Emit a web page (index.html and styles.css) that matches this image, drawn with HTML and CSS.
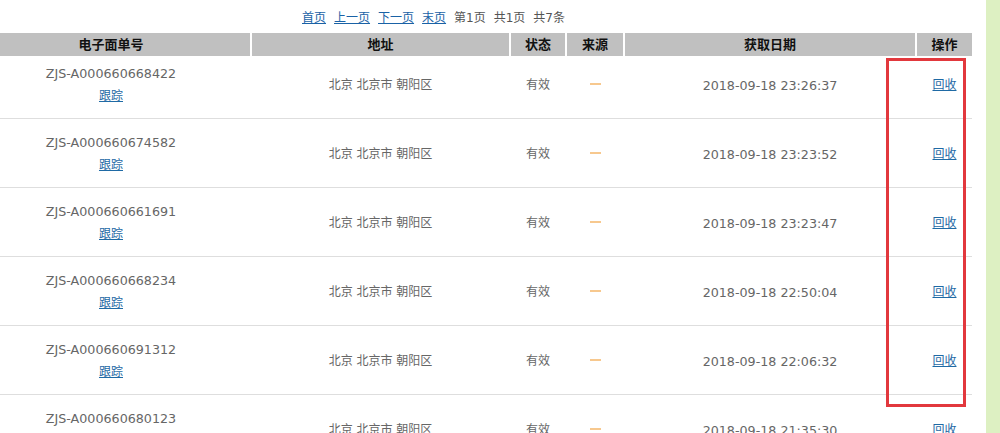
FILE: index.html
```html
<!DOCTYPE html>
<html lang="zh-CN">
<head>
<meta charset="utf-8">
<title>电子面单</title>
<link rel="stylesheet" href="styles.css">
</head>
<body>
<div class="page">
  <div class="main">
    <div class="pager">
      <a href="#" class="plink">首页</a>
      <a href="#" class="plink">上一页</a>
      <a href="#" class="plink">下一页</a>
      <a href="#" class="plink">末页</a>
      <span class="ptext">第1页</span>
      <span class="ptext">共1页</span>
      <span class="ptext">共7条</span>
    </div>
    <div class="table">
      <div class="row head">
        <div class="th">电子面单号</div>
        <div class="th">地址</div>
        <div class="th">状态</div>
        <div class="th">来源</div>
        <div class="th">获取日期</div>
        <div class="th">操作</div>
      </div>
      <div class="row body first">
        <div class="td code"><span class="num">ZJS-A000660668422</span><a href="#" class="link">跟踪</a></div>
        <div class="td">北京 北京市 朝阳区</div>
        <div class="td">有效</div>
        <div class="td src"><span class="dash" title="—"></span></div>
        <div class="td num">2018-09-18 23:26:37</div>
        <div class="td"><a href="#" class="link">回收</a></div>
      </div>
      <div class="row body">
        <div class="td code"><span class="num">ZJS-A000660674582</span><a href="#" class="link">跟踪</a></div>
        <div class="td">北京 北京市 朝阳区</div>
        <div class="td">有效</div>
        <div class="td src"><span class="dash" title="—"></span></div>
        <div class="td num">2018-09-18 23:23:52</div>
        <div class="td"><a href="#" class="link">回收</a></div>
      </div>
      <div class="row body">
        <div class="td code"><span class="num">ZJS-A000660661691</span><a href="#" class="link">跟踪</a></div>
        <div class="td">北京 北京市 朝阳区</div>
        <div class="td">有效</div>
        <div class="td src"><span class="dash" title="—"></span></div>
        <div class="td num">2018-09-18 23:23:47</div>
        <div class="td"><a href="#" class="link">回收</a></div>
      </div>
      <div class="row body">
        <div class="td code"><span class="num">ZJS-A000660668234</span><a href="#" class="link">跟踪</a></div>
        <div class="td">北京 北京市 朝阳区</div>
        <div class="td">有效</div>
        <div class="td src"><span class="dash" title="—"></span></div>
        <div class="td num">2018-09-18 22:50:04</div>
        <div class="td"><a href="#" class="link">回收</a></div>
      </div>
      <div class="row body">
        <div class="td code"><span class="num">ZJS-A000660691312</span><a href="#" class="link">跟踪</a></div>
        <div class="td">北京 北京市 朝阳区</div>
        <div class="td">有效</div>
        <div class="td src"><span class="dash" title="—"></span></div>
        <div class="td num">2018-09-18 22:06:32</div>
        <div class="td"><a href="#" class="link">回收</a></div>
      </div>
      <div class="row body">
        <div class="td code"><span class="num">ZJS-A000660680123</span><a href="#" class="link">跟踪</a></div>
        <div class="td">北京 北京市 朝阳区</div>
        <div class="td">有效</div>
        <div class="td src"><span class="dash" title="—"></span></div>
        <div class="td num">2018-09-18 21:35:30</div>
        <div class="td"><a href="#" class="link">回收</a></div>
      </div>
    </div>
    <div class="mark"></div>
  </div>
  <div class="side"></div>
</div>
</body>
</html>
```

FILE: styles.css
```css
* { box-sizing: border-box; }
html, body {
  margin: 0;
  padding: 0;
  background: #fff;
  font-family: "DejaVu Sans", "Noto Sans CJK SC", sans-serif;
  font-size: 12px;
  color: #666;
}
.page {
  display: flex;
  width: 1000px;
  height: 433px;
  overflow: hidden;
}
.main {
  position: relative;
  width: 986px;
  flex: none;
  overflow: hidden;
}
.side {
  flex: 1;
  background: #ddf0c2;
}
.pager {
  height: 33px;
  padding: 8px 0 0 302px;
  line-height: 20px;
  display: flex;
  gap: 8px;
  white-space: nowrap;
}
.plink {
  color: #1a62a6;
  text-decoration: underline;
}
.ptext { color: #555; }
.table {
  width: 1000px;
  margin-left: -28px;
}
.row {
  display: grid;
  grid-template-columns: 278px 257px 54px 56px 290px 55px;
  column-gap: 2px;
}
.head .th {
  background: #c0c0c0;
  height: 23px;
  line-height: 23px;
  text-align: center;
  font-weight: bold;
  font-size: 13px;
  color: #111;
}
.body {
  height: 69px;
  padding: 12px 0 10px;
  border-bottom: 1px solid #dedede;
  align-items: center;
}
.body.first {
  height: 63px;
  padding-top: 6px;
}
.td {
  text-align: center;
  line-height: 23px;
  height: 23px;
}
.code {
  height: 46px;
  display: flex;
  flex-direction: column;
  align-items: center;
}
.num { font-size: 12.7px; }
.link {
  color: #1f6aa5;
  text-decoration: underline;
}
.src {
  height: 46px;
  display: flex;
  justify-content: center;
  align-items: flex-start;
}
.dash {
  display: block;
  width: 11px;
  height: 2px;
  margin-top: 21px;
  background: #f7c88e;
}
.mark {
  position: absolute;
  left: 886px;
  top: 58px;
  width: 80px;
  height: 349px;
  border: 3px solid #e2383d;
}
```
